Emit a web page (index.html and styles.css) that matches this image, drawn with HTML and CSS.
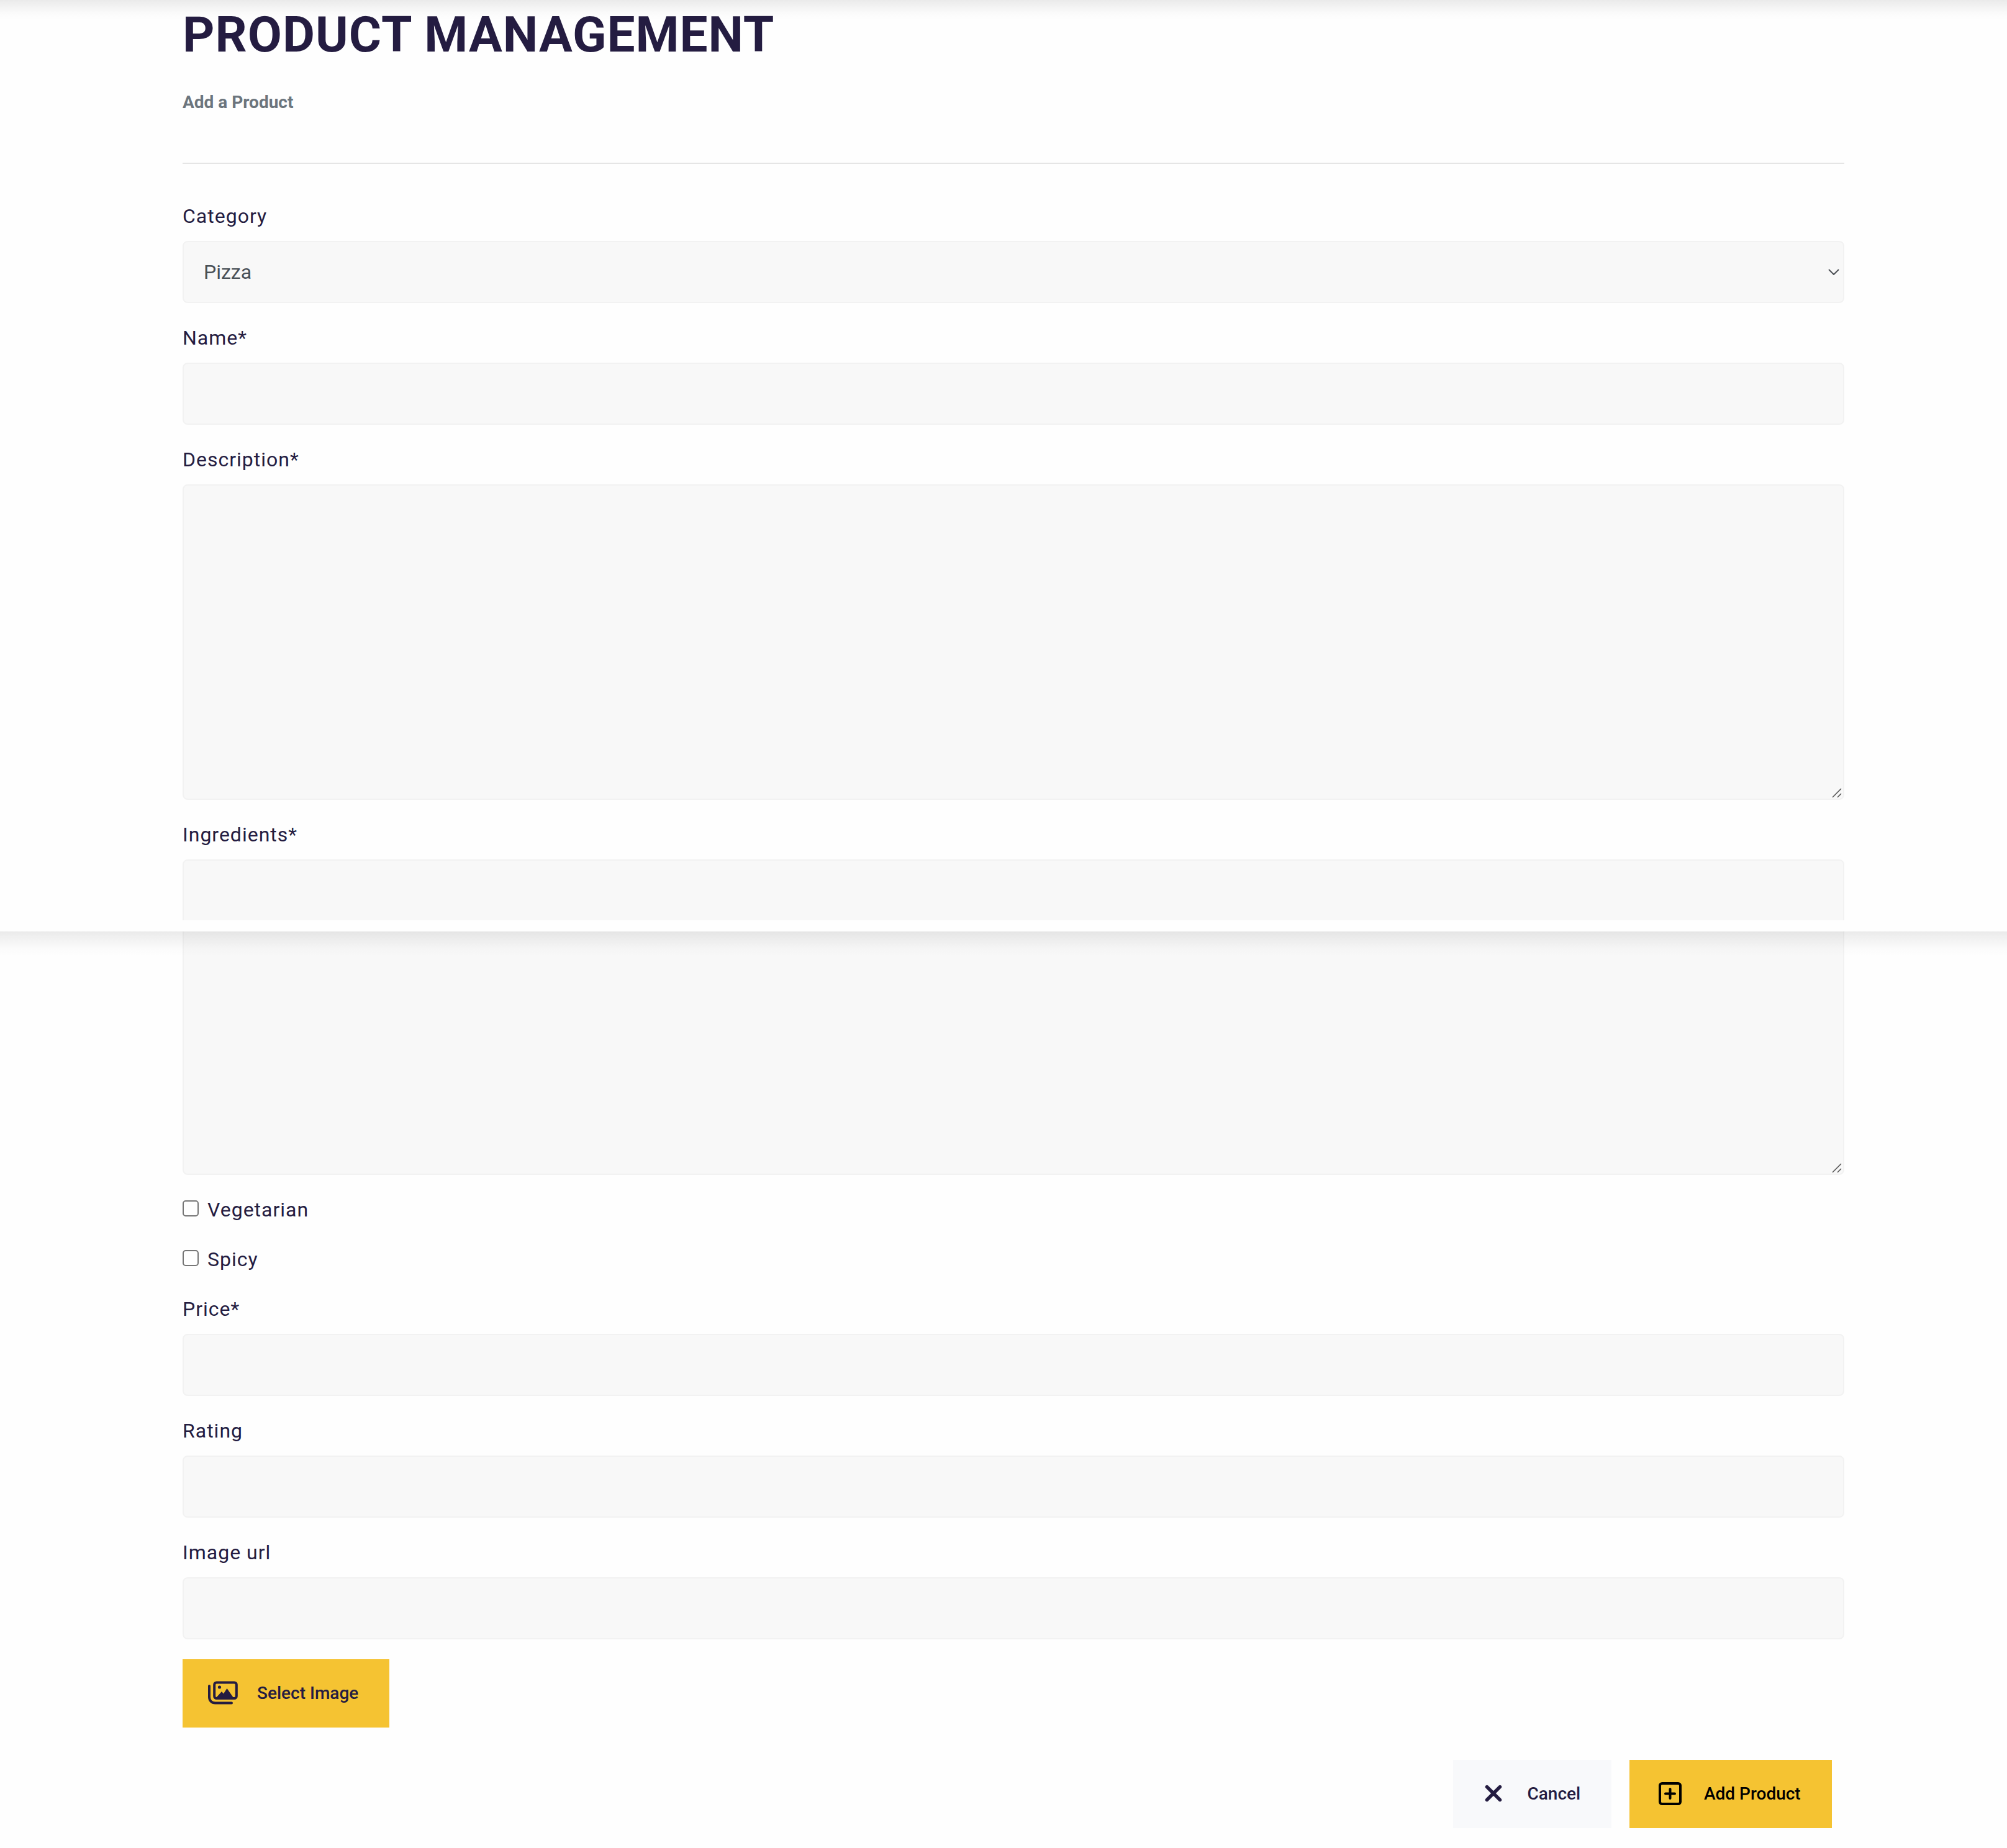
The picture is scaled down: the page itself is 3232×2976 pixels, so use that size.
FILE: index.html
```html
<!DOCTYPE html>
<html lang="en">
<head>
<meta charset="utf-8">
<title>Product Management</title>
<link rel="stylesheet" href="styles.css">
</head>
<body>
<div class="header-shadow header-shadow-top"></div>
<div class="header-shadow header-shadow-fold"></div>
<main class="page">
  <h1 class="title">PRODUCT MANAGEMENT</h1>
  <h2 class="subtitle">Add a Product</h2>
  <hr class="rule">
  <form class="form">
    <div class="group">
      <label class="label" for="category">Category</label>
      <div class="control select" id="category">
        <span>Pizza</span>
        <svg class="chevron" viewBox="0 0 18 10"><path d="M1 1l8 8 8-8"/></svg>
      </div>
    </div>
    <div class="group">
      <label class="label" for="name">Name*</label>
      <input class="control" id="name" type="text">
    </div>
    <div class="group">
      <label class="label" for="description">Description*</label>
      <div class="control area" id="description">
        <svg class="grip" viewBox="0 0 16 16"><path d="M1 15L15 1M9 15l6-6"/></svg>
      </div>
    </div>
    <div class="group">
      <label class="label" for="ingredients">Ingredients*</label>
      <div class="control area" id="ingredients">
        <svg class="grip" viewBox="0 0 16 16"><path d="M1 15L15 1M9 15l6-6"/></svg>
      </div>
    </div>
    <label class="check"><input class="box" type="checkbox"><span>Vegetarian</span></label>
    <label class="check"><input class="box" type="checkbox"><span>Spicy</span></label>
    <div class="group">
      <label class="label" for="price">Price*</label>
      <input class="control" id="price" type="text">
    </div>
    <div class="group">
      <label class="label" for="rating">Rating</label>
      <input class="control" id="rating" type="text">
    </div>
    <div class="group">
      <label class="label" for="image-url">Image url</label>
      <input class="control" id="image-url" type="text">
    </div>
    <button class="btn btn-image" type="button">
      <svg class="icon-images" viewBox="0 0 48 38" fill="none" stroke="currentColor" stroke-width="4" stroke-linecap="round" stroke-linejoin="round">
        <path d="M2 8v18c0 5.500 4 9.500 9.500 9.500H38"/>
        <rect x="10.200" y="2.500" width="35.600" height="25.500" rx="3.500"/>
        <circle cx="18.500" cy="10" r="2.600" fill="currentColor" stroke="none"/>
        <path d="M13 27l9-10 3 3.500 5.500-8.500L41 27z" fill="currentColor" stroke="none"/>
      </svg>
      <span>Select Image</span>
    </button>
    <div class="actions">
      <button class="btn btn-cancel" type="button">
        <svg class="icon-x" viewBox="0 0 28 28"><path d="M3.500 3.500l21 21M24.500 3.500l-21 21"/></svg>
        <span>Cancel</span>
      </button>
      <button class="btn btn-add" type="button">
        <svg class="icon-plus" viewBox="0 0 37 37" fill="none" stroke="currentColor" stroke-width="4" stroke-linecap="round">
          <rect x="2" y="2" width="33" height="33" rx="3.500"/>
          <path d="M11 18.500h15M18.500 11v15"/>
        </svg>
        <span>Add Product</span>
      </button>
    </div>
  </form>
</main>
</body>
</html>
```
FILE: styles.css
```css
* { box-sizing: border-box; }

body {
  margin: 0;
  position: relative;
  height: 2976px;
  overflow: hidden;
  background: #fefefe;
  color: #241c41;
  font-family: Roboto, "Liberation Sans", sans-serif;
  font-size: 32px;
  line-height: 48px;
}

.page {
  width: 2676px;
  margin-left: 294px;
  padding-top: 8px;
}

.title {
  margin: 0;
  font-size: 80px;
  font-weight: 700;
  line-height: 96px;
  letter-spacing: 1px;
}

.subtitle {
  margin: 44px 0 0;
  color: #6c757d;
  font-size: 28px;
  font-weight: 700;
  line-height: 34px;
}

.rule {
  height: 2px;
  margin: 80px 0 60px;
  border: 0;
  background: #e5e5e5;
}

.form {
  display: flex;
  flex-direction: column;
  gap: 32px;
}

.group {
  display: flex;
  flex-direction: column;
  gap: 16px;
}

.label,
.check {
  letter-spacing: 1px;
}

.control {
  width: 100%;
  height: 100px;
  margin: 0;
  padding: 0 32px 0 30px;
  border: 2px solid #f2f2f2;
  border-radius: 8px;
  background: #f8f8f8;
  font: inherit;
}

.select {
  display: flex;
  align-items: center;
  justify-content: space-between;
  padding: 0 6px 0 32px;
  color: #495057;
}

.chevron {
  width: 18px;
  height: 10px;
  fill: none;
  stroke: #4d5156;
  stroke-width: 2;
}

.area {
  display: flex;
  align-items: flex-end;
  justify-content: flex-end;
  height: 508px;
  padding: 0 2px 1px 0;
}

.grip {
  width: 16px;
  height: 16px;
  fill: none;
  stroke: #555;
  stroke-width: 1.6;
}

.check {
  display: flex;
  align-items: center;
  gap: 14px;
  height: 48px;
}

.box {
  appearance: none;
  width: 26px;
  height: 26px;
  margin: 0 0 4px;
  border: 2px solid #767676;
  border-radius: 5px;
  background: #fff;
}

.btn {
  display: flex;
  align-items: center;
  height: 110px;
  margin: 0;
  border: 0;
  padding: 0;
  color: #241c41;
  background: #f5c332;
  font: 500 28px/42px Roboto, "Liberation Sans", sans-serif;
  white-space: nowrap;
}

.btn svg {
  flex: none;
  margin-bottom: 2px;
}

.btn-image {
  width: 333px;
  padding-left: 41px;
  gap: 31px;
}

.icon-images {
  width: 48px;
  height: 38px;
}

.actions {
  display: flex;
  justify-content: flex-end;
  gap: 29px;
  margin-top: 20px;
  padding-right: 20px;
}

.btn-cancel {
  width: 255px;
  padding-left: 50.5px;
  gap: 41px;
  background: #f8f9fb;
}

.icon-x {
  width: 28px;
  height: 28px;
  fill: none;
  stroke: currentColor;
  stroke-width: 5.4;
  stroke-linecap: round;
}

.btn-add {
  width: 326px;
  padding-left: 47px;
  gap: 36px;
  color: #000;
}

.icon-plus {
  width: 37px;
  height: 37px;
}

.header-shadow {
  position: absolute;
  left: 0;
  right: 0;
  z-index: 1;
  height: 40px;
  background: linear-gradient(rgba(0, 0, 0, 0.08), rgba(0, 0, 0, 0.045) 35%, rgba(0, 0, 0, 0.012) 70%, rgba(0, 0, 0, 0));
}

.header-shadow-top {
  top: 0;
  height: 32px;
}

.header-shadow-fold {
  top: 1482px;
  height: 58px;
  border-top: 18px solid #fefefe;
  background-clip: padding-box;
}
```
